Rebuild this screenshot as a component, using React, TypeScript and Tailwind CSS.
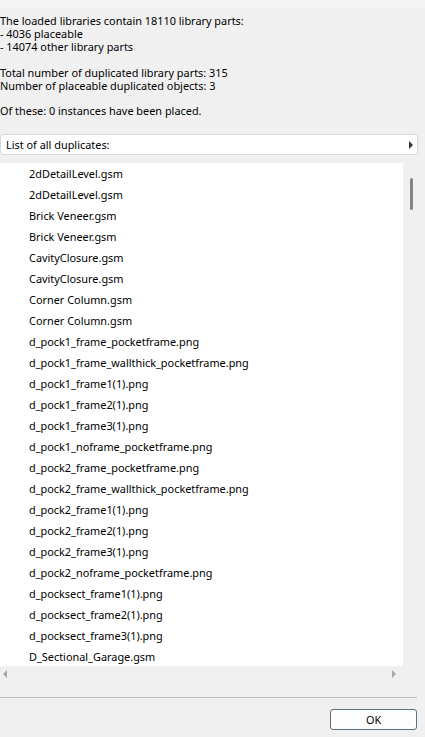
const duplicates = [
  "2dDetailLevel.gsm",
  "2dDetailLevel.gsm",
  "Brick Veneer.gsm",
  "Brick Veneer.gsm",
  "CavityClosure.gsm",
  "CavityClosure.gsm",
  "Corner Column.gsm",
  "Corner Column.gsm",
  "d_pock1_frame_pocketframe.png",
  "d_pock1_frame_wallthick_pocketframe.png",
  "d_pock1_frame1(1).png",
  "d_pock1_frame2(1).png",
  "d_pock1_frame3(1).png",
  "d_pock1_noframe_pocketframe.png",
  "d_pock2_frame_pocketframe.png",
  "d_pock2_frame_wallthick_pocketframe.png",
  "d_pock2_frame1(1).png",
  "d_pock2_frame2(1).png",
  "d_pock2_frame3(1).png",
  "d_pock2_noframe_pocketframe.png",
  "d_pocksect_frame1(1).png",
  "d_pocksect_frame2(1).png",
  "d_pocksect_frame3(1).png",
  "D_Sectional_Garage.gsm",
];

export default function App() {
  return (
    <div
      className="w-[425px] h-[737px] overflow-hidden bg-[#f0f0f0] text-[#000] text-[10.9px] leading-[13px]"
      style={{ fontFamily: '"Noto Sans", "Open Sans", sans-serif' }}
    >
      {/* thin lighter strip at the top */}
      <div className="h-[8px] bg-[#f3f3f3]" />

      {/* summary text */}
      <div className="pt-[6px]">
        <p>The loaded libraries contain 18110 library parts:</p>
        <p>- 4036 placeable</p>
        <p>- 14074 other library parts</p>
        <p className="mt-[13px]">Total number of duplicated library parts: 315</p>
        <p>Number of placeable duplicated objects: 3</p>
        <p className="mt-[12px]">Of these: 0 instances have been placed.</p>
      </div>

      {/* dropdown */}
      <div className="mt-[17px] w-[418px] h-[21px] bg-white border border-[#d9d9d9] rounded-[3px] flex items-center justify-between pl-[5px] pr-[4px]">
        <span>List of all duplicates:</span>
        <span className="w-0 h-0 border-y-[4px] border-y-transparent border-l-[4px] border-l-[#333]" />
      </div>

      {/* list with scrollbars */}
      <div className="mt-[8px] flex">
        <div className="w-[403px] h-[503px] bg-white overflow-hidden">
          {duplicates.map((d, i) => (
            <div key={i} className="h-[21px] flex items-center pl-[29px]">
              {d}
            </div>
          ))}
        </div>
        {/* vertical scrollbar */}
        <div className="w-[17px] h-[503px] flex justify-center pt-[15px]">
          <div className="w-[3px] h-[32px] bg-[#858585] rounded-full" />
        </div>
      </div>
      {/* horizontal scrollbar */}
      <div className="w-[403px] h-[16px] flex items-center justify-between pl-[3px] pr-[7px]">
        <span className="w-0 h-0 border-y-[4px] border-y-transparent border-r-[4px] border-r-[#a8a8a8]" />
        <span className="w-0 h-0 border-y-[4px] border-y-transparent border-l-[4px] border-l-[#a8a8a8]" />
      </div>

      {/* footer */}
      <div className="mt-[15px] w-[417px] border-t border-[#bdbdbd]" />
      <div className="flex justify-end pr-[8px] pt-[11px]">
        <button className="w-[87px] h-[21px] bg-[#fdfdfd] border border-[#5b6f80] rounded-[3px] flex items-center justify-center">
          OK
        </button>
      </div>
    </div>
  );
}
